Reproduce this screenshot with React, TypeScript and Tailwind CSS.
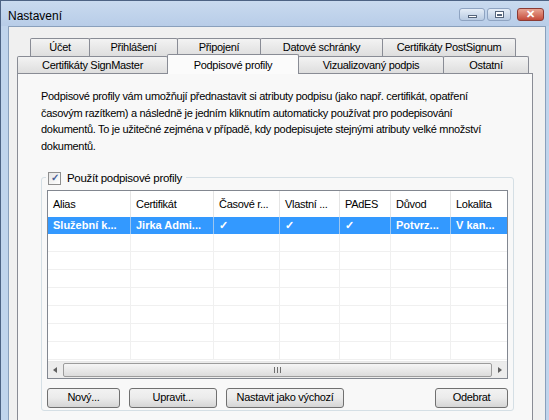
import React from 'react';

const topTabs = [
  { label: 'Účet', w: 60 },
  { label: 'Přihlášení', w: 89 },
  { label: 'Připojení', w: 84 },
  { label: 'Datové schránky', w: 123 },
  { label: 'Certifikáty PostSignum', w: 134 },
];

const bottomTabs = [
  { label: 'Certifikáty SignMaster', w: 151 },
  { label: 'Podpisové profily', w: 132, active: true },
  { label: 'Vizualizovaný podpis', w: 146 },
  { label: 'Ostatní', w: 86 },
];

const columns = [
  { label: 'Alias', w: 83, value: 'Služební k...' },
  { label: 'Certifikát', w: 83, value: 'Jirka Admi...' },
  { label: 'Časové r...', w: 66, value: '✓' },
  { label: 'Vlastní ...', w: 60, value: '✓' },
  { label: 'PAdES', w: 51, value: '✓' },
  { label: 'Důvod', w: 60, value: 'Potvrz...' },
  { label: 'Lokalita', w: 58, value: 'V kan...' },
];

const description = [
  'Podpisové profily vám umožňují přednastavit si atributy podpisu (jako např. certifikát, opatření',
  'časovým razítkem) a následně je jedním kliknutím automaticky používat pro podepisování',
  'dokumentů. To je užitečné zejména v případě, kdy podepisujete stejnými atributy velké množství',
  'dokumentů.',
];

function CaptionButtons() {
  return (
    <div className="flex items-start gap-[2px] pt-[7px]">
      <div className="w-[26px] h-[13px] border border-[#8ea3c1] rounded-[3px] bg-gradient-to-b from-[#e5edf7] to-[#b9cbe2] flex items-end justify-center pb-[2px]">
        <div className="w-[9px] h-[3px] bg-white border border-[#55657c]" />
      </div>
      <div className="w-[24px] h-[13px] border border-[#8ea3c1] rounded-[3px] bg-gradient-to-b from-[#e5edf7] to-[#b9cbe2] flex items-center justify-center">
        <div className="w-[9px] h-[7px] border border-[#55657c] bg-white flex items-center justify-center">
          <div className="w-[5px] h-[2px] bg-[#55657c]" />
        </div>
      </div>
      <div className="ml-[4px] w-[27px] h-[13px] border border-[#8b3a34] rounded-[3px] bg-gradient-to-b from-[#e8a493] to-[#c44a3a] flex items-center justify-center text-white text-[11px] font-bold leading-none">
        ✕
      </div>
    </div>
  );
}

function Btn({ label, w }: { label: string; w: number }) {
  return (
    <button
      style={{ width: w }}
      className="h-[20px] border border-[#707070] rounded-[3px] bg-gradient-to-b from-[#f2f2f2] via-[#ebebeb] to-[#d5d5d5] text-black leading-none"
    >
      {label}
    </button>
  );
}

export default function App() {
  return (
    <div
      className="w-[549px] h-[420px] overflow-hidden bg-[#c0d4ec] border-l border-t border-[#4d6384] flex flex-col text-black"
      style={{ fontFamily: '"Liberation Sans", Arial, sans-serif' }}
    >
      {/* title bar */}
      <div className="h-[25px] flex shrink-0 bg-gradient-to-b from-[#c9daef] to-[#b8cde8]">
        <div className="flex-1 pl-[7px] pt-[6px] text-[12px]">Nastavení</div>
        <div className="pr-[5px]">
          <CaptionButtons />
        </div>
      </div>

      {/* client area */}
      <div className="flex-1 ml-[7px] mr-[3px] border-l border-r border-t border-[#8aa0bc] bg-[#f0f0f0] pl-[8px] pr-[12px] pt-[11px] text-[11px] tracking-[-0.3px]">
        {/* tabs */}
        <div className="flex flex-col">
          <div className="flex pl-[13px] h-[18px]">
            {topTabs.map(t => (
              <div
                key={t.label}
                style={{ width: t.w }}
                className="h-[18px] -mr-px border border-[#898c95] border-b-0 rounded-t-[2px] bg-gradient-to-b from-[#f3f3f3] to-[#dedede] flex items-center justify-center"
              >
                {t.label}
              </div>
            ))}
          </div>
          <div className="flex h-[17px] items-end relative z-10">
            {bottomTabs.map(t =>
              t.active ? (
                <div
                  key={t.label}
                  style={{ width: t.w }}
                  className="h-[20px] -mb-px -mr-px border border-[#898c95] border-b-0 rounded-t-[2px] bg-[#fbfbfb] flex items-start pt-[2px] justify-center"
                >
                  {t.label}
                </div>
              ) : (
                <div
                  key={t.label}
                  style={{ width: t.w }}
                  className="h-[17px] -mr-px border border-[#898c95] border-b-0 rounded-t-[2px] bg-gradient-to-b from-[#f3f3f3] to-[#dedede] flex items-center justify-center"
                >
                  {t.label}
                </div>
              )
            )}
          </div>

          {/* tab page */}
          <div className="w-[516px] h-[400px] border border-[#898c95] bg-[#f8f8f8] pl-[23px] pr-[18px] pt-[14px]">
            <div className="leading-[16.7px]">
              {description.map(line => (
                <div key={line} className="whitespace-nowrap">{line}</div>
              ))}
            </div>

            {/* group box */}
            <div className="mt-[22px] relative border border-[#d5dfe5] rounded-[3px] w-[473px] h-[234px] pt-[12px] px-[5px]">
              <div className="absolute -top-[8px] left-[4px] flex items-center gap-[6px] bg-[#f8f8f8] pl-[2px] pr-[4px]">
                <div className="w-[13px] h-[13px] border border-[#8f8f8f] bg-gradient-to-br from-[#e6e6e6] to-white flex items-center justify-center text-[10px] leading-none text-[#4a5f97] font-bold">
                  ✓
                </div>
                <span className="text-[11.5px]">Použít podpisové profily</span>
              </div>

              {/* list view */}
              <div className="border border-[#828790] bg-white h-[189px] flex flex-col">
                <div className="flex-1 overflow-hidden">
                  <div className="flex h-[26px]">
                    {columns.map((c, i) => (
                      <div
                        key={c.label}
                        style={{ width: c.w }}
                        className={`shrink-0 flex items-center pl-[5px] ${i < columns.length - 1 ? 'border-r border-[#e5e5e5]' : ''}`}
                      >
                        {c.label}
                      </div>
                    ))}
                  </div>
                  <div className="flex h-[17px] bg-[#3399ff] text-white font-bold tracking-normal">
                    {columns.map((c, i) => (
                      <div
                        key={c.label}
                        style={{ width: c.w }}
                        className={`shrink-0 flex items-center pl-[5px] overflow-hidden whitespace-nowrap ${i < columns.length - 1 ? 'border-r border-[#e5e5e5]/60' : ''}`}
                      >
                        {c.value}
                      </div>
                    ))}
                  </div>
                  {[0, 1, 2, 3, 4, 5, 6].map(r => (
                    <div key={r} className="flex h-[18px] border-b border-[#f0f0f0]">
                      {columns.map((c, i) => (
                        <div
                          key={c.label}
                          style={{ width: c.w }}
                          className={`shrink-0 ${i < columns.length - 1 ? 'border-r border-[#f0f0f0]' : ''}`}
                        />
                      ))}
                    </div>
                  ))}
                </div>

                {/* horizontal scrollbar */}
                <div className="h-[17px] shrink-0 bg-[#ececec] border-t border-[#e8e8e8] flex items-center px-[3px] gap-[4px]">
                  <div className="w-[8px] flex justify-center">
                    <div className="w-0 h-0 border-y-[3.5px] border-y-transparent border-r-[4px] border-r-[#606060]" />
                  </div>
                  <div className="flex-1 h-[14px] rounded-[2px] border border-[#9c9c9c] bg-gradient-to-b from-[#f6f6f6] to-[#dcdcdc] flex items-center justify-center gap-[2px]">
                    <div className="w-px h-[6px] bg-[#6f6f6f]" />
                    <div className="w-px h-[6px] bg-[#6f6f6f]" />
                    <div className="w-px h-[6px] bg-[#6f6f6f]" />
                  </div>
                  <div className="w-[8px] flex justify-center">
                    <div className="w-0 h-0 border-y-[3.5px] border-y-transparent border-l-[4px] border-l-[#606060]" />
                  </div>
                </div>
              </div>

              <div className="flex mt-[9px] gap-[9px]">
                <Btn label="Nový..." w={73} />
                <Btn label="Upravit..." w={88} />
                <Btn label="Nastavit jako výchozí" w={118} />
                <div className="flex-1" />
                <Btn label="Odebrat" w={73} />
              </div>
            </div>
          </div>
        </div>
      </div>
    </div>
  );
}
